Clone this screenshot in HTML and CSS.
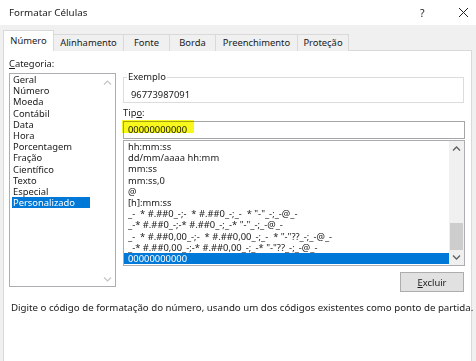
FILE: index.html
```html
<!DOCTYPE html>
<html lang="pt-br">
<head>
    <meta charset="UTF-8">
    <meta name="viewport" content="width=device-width, initial-scale=1.0">
    <title>Formatar Células</title>
    <link rel="stylesheet" href="styles.css">
</head>
<body>

    <div class="titlebar">
        <span class="title">Formatar Células</span>
        <span class="help">?</span>
        <span class="close">
            <svg width="11" height="11" viewBox="0 0 11 11"><path d="M1 1 L10 10 M10 1 L1 10" stroke="#222" stroke-width="1"/></svg>
        </span>
    </div>

    <div class="tabs">
        <div class="tab active" style="width: 51px">Número</div>
        <div class="tab" style="width: 71px">Alinhamento</div>
        <div class="tab" style="width: 47px">Fonte</div>
        <div class="tab" style="width: 47px">Borda</div>
        <div class="tab" style="width: 83px">Preenchimento</div>
        <div class="tab" style="width: 52px">Proteção</div>
    </div>

    <div class="panel">
        <div class="columns">
            <div class="left">
                <div class="label"><u>C</u>ategoria:</div>
                <div class="listbox categorias">
                    <ul>
                        <li>Geral</li>
                        <li>Número</li>
                        <li>Moeda</li>
                        <li>Contábil</li>
                        <li>Data</li>
                        <li>Hora</li>
                        <li>Porcentagem</li>
                        <li>Fração</li>
                        <li>Científico</li>
                        <li>Texto</li>
                        <li>Especial</li>
                        <li class="selected">Personalizado</li>
                    </ul>
                    <div class="vscroll disabled">
                        <span class="arrow up"><svg width="9" height="5" viewBox="0 0 9 5"><path d="M1 4.5 L4.5 1 L8 4.5" fill="none" stroke="#c4c4c4" stroke-width="1.2"/></svg></span>
                        <span class="arrow down"><svg width="9" height="5" viewBox="0 0 9 5"><path d="M1 0.5 L4.5 4 L8 0.5" fill="none" stroke="#c4c4c4" stroke-width="1.2"/></svg></span>
                    </div>
                </div>
            </div>

            <div class="right">
                <fieldset class="sample">
                    <legend>Exemplo</legend>
                    <div class="sample-value">96773987091</div>
                </fieldset>

                <div class="label tipo">Tip<u>o</u>:</div>
                <div class="textbox">
                    00000000000
                    <span class="mark"></span>
                </div>

                <div class="listbox formatos">
                    <ul>
                        <li>hh:mm:ss</li>
                        <li>dd/mm/aaaa hh:mm</li>
                        <li>mm:ss</li>
                        <li>mm:ss,0</li>
                        <li>@</li>
                        <li>[h]:mm:ss</li>
                        <li>_-&nbsp; * #.##0_-;-&nbsp; * #.##0_-;_-&nbsp; * "-"_-;_-@_-</li>
                        <li>_-* #.##0_-;-* #.##0_-;_-* "-"_-;_-@_-</li>
                        <li>_-&nbsp; * #.##0,00_-;-&nbsp; * #.##0,00_-;_-&nbsp; * "-"??_-;_-@_-</li>
                        <li>_-* #.##0,00_-;-* #.##0,00_-;_-* "-"??_-;_-@_-</li>
                        <li class="selected">00000000000</li>
                    </ul>
                    <div class="vscroll">
                        <span class="arrow up"><svg width="9" height="5" viewBox="0 0 9 5"><path d="M1 4.5 L4.5 1 L8 4.5" fill="none" stroke="#606060" stroke-width="1.3"/></svg></span>
                        <span class="track"><span class="thumb"></span></span>
                        <span class="arrow down"><svg width="9" height="5" viewBox="0 0 9 5"><path d="M1 0.5 L4.5 4 L8 0.5" fill="none" stroke="#606060" stroke-width="1.3"/></svg></span>
                    </div>
                </div>

                <div class="actions">
                    <button><u>E</u>xcluir</button>
                </div>
            </div>
        </div>

        <p class="hint">Digite o código de formatação do número, usando um dos códigos existentes como ponto de partida.</p>
    </div>

</body>
</html>
```

FILE: styles.css
```css
body {
    margin: 0;
    height: 361px;
    overflow: hidden;
    background-color: #f0f0f0;
    font-family: 'Noto Sans', 'Open Sans', sans-serif;
    font-size: 9.4px;
    color: #1a1a1a;
}
u {
    text-decoration-thickness: 1px;
    text-underline-offset: 1px;
}
.titlebar {
    height: 25px;
    background-color: #ffffff;
    display: flex;
    align-items: center;
    padding-left: 9px;
}
.title {
    font-size: 9.8px;
}
.help {
    margin-left: auto;
    font-size: 10.5px;
    width: 8px;
    margin-right: 30px;
}
.close {
    width: 11px;
    height: 11px;
    margin-right: 7px;
    display: flex;
}
.tabs {
    display: flex;
    align-items: flex-end;
    height: 20px;
    margin-top: 6px;
    padding-left: 3px;
    margin-bottom: -1px;
    position: relative;
    z-index: 1;
}
.tab {
    height: 17px;
    line-height: 16px;
    box-sizing: border-box;
    text-align: center;
    border: 1px solid #d9d9d9;
    border-bottom: none;
    margin-right: -1px;
    background-color: #f0f0f0;
}
.tab.active {
    height: 21px;
    line-height: 20px;
    background-color: #ffffff;
}
.panel {
    margin: 0 4px 0 3px;
    height: 310px;
    background-color: #ffffff;
    border: 1px solid #d9d9d9;
    border-bottom: none;
}
.columns {
    display: flex;
    gap: 7px;
    padding: 6px 6px 0 5px;
}
.left {
    width: 107px;
}
.right {
    width: 342px;
}
.label {
    line-height: 14px;
    margin-bottom: 2px;
}
.listbox {
    position: relative;
    box-sizing: border-box;
    border: 1px solid #abadb3;
    background-color: #ffffff;
    display: flex;
    overflow: hidden;
}
.listbox ul {
    list-style: none;
    margin: 0;
    padding: 0;
    flex: 1;
}
.listbox li {
    line-height: 11.2px;
    height: 11.2px;
    white-space: nowrap;
}
.categorias {
    height: 214px;
}
.categorias ul {
    padding-left: 2px;
}
.categorias li {
    padding-left: 1px;
    width: 77px;
}
.listbox li.selected {
    background-color: #0078d7;
    color: #ffffff;
}
.vscroll {
    width: 15px;
    display: flex;
    flex-direction: column;
    background-color: #f0f0f0;
}
.vscroll.disabled {
    width: 16px;
    background-color: #ffffff;
    justify-content: space-between;
}
.arrow {
    height: 15px;
    display: flex;
    align-items: center;
    justify-content: center;
}
.disabled .arrow.up {
    margin-top: 1px;
}
.disabled .arrow.down {
    margin-bottom: -1px;
}
.track {
    flex: 1;
    display: flex;
    flex-direction: column;
    justify-content: flex-end;
    padding: 0 1px;
}
.thumb {
    height: 27px;
    background-color: #cdcdcd;
}
.sample {
    margin: 14px 1px 0 0;
    padding: 0 3px 1px 3px;
    border: 1px solid #dcdcdc;
    min-width: 0;
}
.sample legend {
    padding: 0 1px;
    line-height: 12px;
}
.sample-value {
    line-height: 12px;
    padding: 6px 0 0 4px;
}
.tipo {
    margin-top: 4px;
    line-height: 12px;
}
.textbox {
    position: relative;
    height: 18px;
    box-sizing: border-box;
    border: 1px solid #a6a6a6;
    line-height: 16px;
    padding-left: 4px;
}
.mark {
    position: absolute;
    left: -2px;
    top: -2px;
    width: 72px;
    height: 13px;
    background-color: #f8f81c;
    mix-blend-mode: multiply;
}
.formatos {
    margin-top: 1px;
    height: 126px;
}
.formatos li {
    padding-left: 4px;
}
.actions {
    display: flex;
    justify-content: flex-end;
    margin-top: 6px;
    padding-right: 1px;
}
button {
    width: 64px;
    height: 20px;
    font-family: inherit;
    font-size: 9.4px;
    color: #1a1a1a;
    background-color: #e1e1e1;
    border: 1px solid #adadad;
    padding: 0;
}
.hint {
    margin: 10px 0 0 7px;
    line-height: 12px;
    font-size: 9.7px;
    white-space: nowrap;
}
```
